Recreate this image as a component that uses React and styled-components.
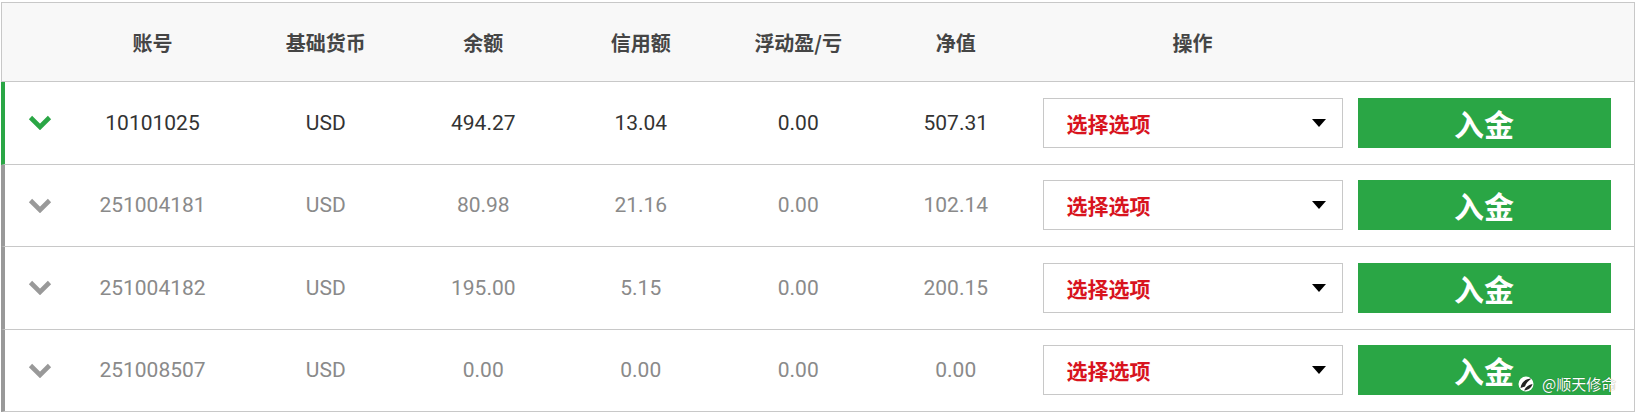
import React from "react";
import styled, { createGlobalStyle } from "styled-components";

const GlobalStyle = createGlobalStyle`
  html, body {
    margin: 0;
    padding: 0;
    background: #fff;
  }
  body {
    font-family: Roboto, "Noto Sans CJK SC", "Noto Sans", sans-serif;
  }
`;

const GREEN = "#2aa645";
const COLS = "53px 189px repeat(5, 157.5px) 1fr";

const Page = styled.div`
  position: relative;
  width: 1636px;
  height: 412px;
  padding: 2px 0 0 1px;
  box-sizing: border-box;
`;

const Table = styled.div`
  width: 1634px;
  box-sizing: border-box;
  border-top: 1px solid #c8c8c8;
  border-right: 1px solid #c8c8c8;
`;

const HeadRow = styled.div`
  display: grid;
  grid-template-columns: ${COLS};
  height: 78px;
  padding-left: 3px;
  background: #f8f8f8;
  border-left: 1px solid #c8c8c8;
  border-bottom: 1px solid #c8c8c8;
`;

const HeadCell = styled.div`
  display: flex;
  align-items: center;
  justify-content: center;
  font-family: "Noto Sans CJK SC", sans-serif;
  font-weight: 700;
  font-size: 20px;
  color: #454545;
`;

const Row = styled.div`
  display: grid;
  grid-template-columns: ${COLS};
  height: 81.5px;
  border-left: 4px solid ${(p) => (p.$active ? GREEN : "#999")};
  border-bottom: 1px solid #c8c8c8;
`;

const Cell = styled.div`
  display: flex;
  align-items: center;
  justify-content: center;
  font-size: 21px;
  color: ${(p) => (p.$active ? "#333" : "#8a8a8a")};
`;

const ToggleCell = styled.div`
  display: flex;
  align-items: center;
  padding-left: 23px;
  color: ${(p) => (p.$active ? GREEN : "#999")};
`;

const ActionCell = styled.div`
  display: flex;
  align-items: center;
  gap: 15px;
  padding: 0 23px 0 8px;
`;

const ActionHead = styled(HeadCell)`
  width: 300px;
`;

const Select = styled.div`
  width: 300px;
  height: 50px;
  box-sizing: border-box;
  border: 1px solid #c8c8c8;
  display: flex;
  align-items: center;
  justify-content: space-between;
  padding: 0 16px 0 23px;
  background: #fff;
  font-family: "Noto Sans CJK SC", sans-serif;
  font-weight: 700;
  font-size: 21px;
  color: #d8141e;
`;

const Caret = styled.span`
  width: 0;
  height: 0;
  border-left: 7.5px solid transparent;
  border-right: 7.5px solid transparent;
  border-top: 8px solid #000;
`;

const DepositButton = styled.button`
  width: 253px;
  height: 50px;
  border: none;
  background: ${GREEN};
  color: #fff;
  font-family: "Noto Sans CJK SC", sans-serif;
  font-weight: 700;
  font-size: 30px;
  padding: 0;
  cursor: pointer;
`;

const Watermark = styled.div`
  position: absolute;
  left: 1518px;
  top: 373px;
  display: flex;
  align-items: center;
  gap: 8px;
  font-family: "Noto Sans CJK SC", sans-serif;
  font-size: 15px;
  color: #fff;
  text-shadow: 0 0 1px rgba(0, 0, 0, 0.5);
  white-space: nowrap;
`;

const Chevron = () => (
  <svg width="24" height="15" viewBox="0 0 24 15">
    <polyline
      points="2.5,2.5 12,12 21.5,2.5"
      fill="none"
      stroke="currentColor"
      strokeWidth="4.6"
    />
  </svg>
);

const MarkIcon = () => (
  <svg width="16" height="16" viewBox="0 0 16 16">
    <circle cx="8" cy="8" r="7.5" fill="#fff" />
    <path d="M2.5 12 C3.5 6 7.5 2.5 13.5 2.5 C10 5 8 7.5 7 10.5 Z" fill="#222" />
    <path d="M6 14.5 C8 10.5 11 8.5 14.5 8 C13.5 11.5 10.5 14 6 14.5 Z" fill="#222" />
  </svg>
);

const accounts = [
  { id: "10101025", cur: "USD", bal: "494.27", credit: "13.04", pl: "0.00", eq: "507.31", active: true },
  { id: "251004181", cur: "USD", bal: "80.98", credit: "21.16", pl: "0.00", eq: "102.14" },
  { id: "251004182", cur: "USD", bal: "195.00", credit: "5.15", pl: "0.00", eq: "200.15" },
  { id: "251008507", cur: "USD", bal: "0.00", credit: "0.00", pl: "0.00", eq: "0.00" },
];

const headers = ["账号", "基础货币", "余额", "信用额", "浮动盈/亏", "净值"];

export default function App() {
  return (
    <Page>
      <GlobalStyle />
      <Table>
        <HeadRow>
          <div />
          {headers.map((h) => (
            <HeadCell key={h}>{h}</HeadCell>
          ))}
          <ActionCell>
            <ActionHead>操作</ActionHead>
          </ActionCell>
        </HeadRow>
        {accounts.map((a) => (
          <Row key={a.id} $active={a.active}>
            <ToggleCell $active={a.active}>
              <Chevron />
            </ToggleCell>
            <Cell $active={a.active}>{a.id}</Cell>
            <Cell $active={a.active}>{a.cur}</Cell>
            <Cell $active={a.active}>{a.bal}</Cell>
            <Cell $active={a.active}>{a.credit}</Cell>
            <Cell $active={a.active}>{a.pl}</Cell>
            <Cell $active={a.active}>{a.eq}</Cell>
            <ActionCell>
              <Select>
                选择选项
                <Caret />
              </Select>
              <DepositButton>入金</DepositButton>
            </ActionCell>
          </Row>
        ))}
      </Table>
      <Watermark>
        <MarkIcon />
        @顺天修命
      </Watermark>
    </Page>
  );
}
